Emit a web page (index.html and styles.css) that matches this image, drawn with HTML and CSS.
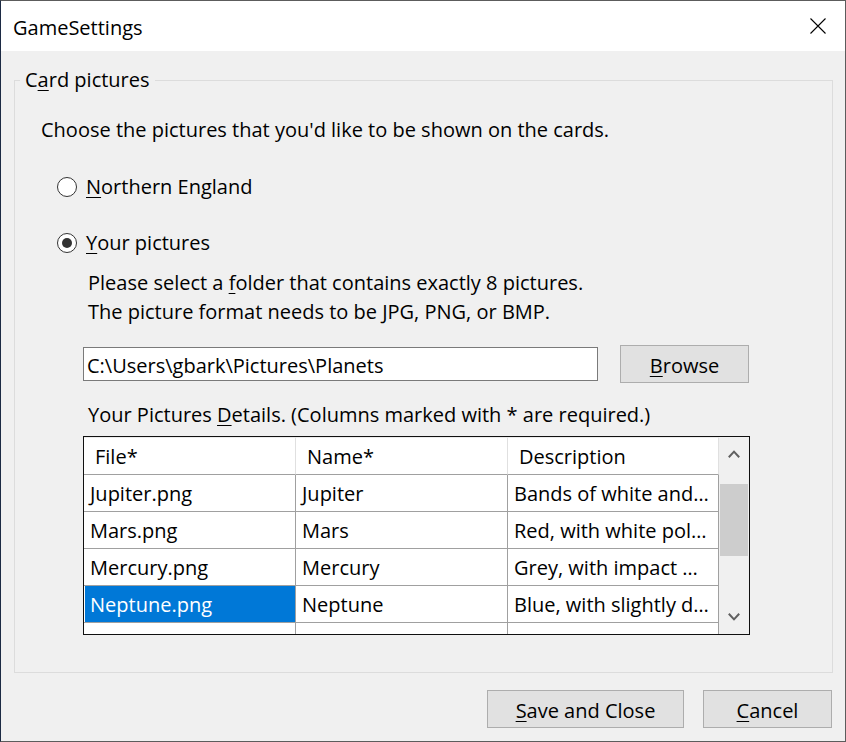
FILE: index.html
```html
<!DOCTYPE html>
<html lang="en">
<head>
<meta charset="utf-8">
<title>GameSettings</title>
<link rel="stylesheet" href="styles.css">
</head>
<body>
<div class="window">
  <div class="titlebar">
    <span class="title">GameSettings</span>
    <button class="close" aria-label="Close">
      <svg width="16" height="16" viewBox="0 0 16 16"><path d="M0.5 0.5 L15.5 15.5 M15.5 0.5 L0.5 15.5" stroke="#000" stroke-width="1.1" fill="none"/></svg>
    </button>
  </div>
  <div class="body">
    <fieldset class="group">
      <legend>C<u>a</u>rd pictures</legend>
      <p class="intro">Choose the pictures that you'd like to be shown on the cards.</p>
      <label class="radio first"><input type="radio" name="src"><span><u>N</u>orthern England</span></label>
      <label class="radio second"><input type="radio" name="src" checked><span><u>Y</u>our pictures</span></label>
      <div class="sub">
        <p class="hint">Please select a <u>f</u>older that contains exactly 8 pictures.<br>The picture format needs to be JPG, PNG, or BMP.</p>
        <div class="path-row">
          <input class="path" type="text" value="C:\Users\gbark\Pictures\Planets">
          <button class="btn browse"><u>B</u>rowse</button>
        </div>
        <p class="details-label">Your Pictures <u>D</u>etails. (Columns marked with * are required.)</p>
        <div class="grid">
          <div class="table">
            <div class="row head"><div class="cell">File*</div><div class="cell">Name*</div><div class="cell">Description</div></div>
            <div class="row"><div class="cell">Jupiter.png</div><div class="cell">Jupiter</div><div class="cell">Bands of white and…</div></div>
            <div class="row"><div class="cell">Mars.png</div><div class="cell">Mars</div><div class="cell">Red, with white pol…</div></div>
            <div class="row"><div class="cell">Mercury.png</div><div class="cell">Mercury</div><div class="cell">Grey, with impact …</div></div>
            <div class="row"><div class="cell selected">Neptune.png</div><div class="cell">Neptune</div><div class="cell">Blue, with slightly d…</div></div>
            <div class="row"><div class="cell"></div><div class="cell"></div><div class="cell"></div></div>
          </div>
          <div class="scrollbar">
            <div class="sb-btn"><svg width="12" height="8" viewBox="0 0 12 8"><path d="M0.8 7.2 L6 1.6 L11.2 7.2" stroke="#606060" stroke-width="2" fill="none"/></svg></div>
            <div class="track"><div class="thumb"></div></div>
            <div class="sb-btn"><svg width="12" height="8" viewBox="0 0 12 8"><path d="M0.8 0.8 L6 6.4 L11.2 0.8" stroke="#606060" stroke-width="2" fill="none"/></svg></div>
          </div>
        </div>
      </div>
    </fieldset>
    <div class="actions">
      <button class="btn save"><u>S</u>ave and Close</button>
      <button class="btn cancel"><u>C</u>ancel</button>
    </div>
  </div>
</div>
</body>
</html>
```

FILE: styles.css
```css
* { box-sizing: border-box; }

html, body {
  margin: 0;
  padding: 0;
  background: #f0f0f0;
}

body {
  font-family: "Open Sans", "Noto Sans", "Liberation Sans", sans-serif;
  font-size: 20px;
  color: #000;
}

.window {
  width: 846px;
  height: 742px;
  border: 1px solid #5c5c5c;
  border-left-color: #1c2a44;
  background: #f0f0f0;
  display: flex;
  flex-direction: column;
}

.titlebar {
  height: 50px;
  background: #fff;
  display: flex;
  align-items: center;
  justify-content: space-between;
  padding-left: 12px;
}

.title {
  font-size: 20px;
  line-height: 28px;
  padding-top: 4px;
}

.close {
  border: 0;
  background: transparent;
  padding: 0;
  width: 46px;
  height: 50px;
  margin-right: 4px;
  display: flex;
  align-items: center;
  justify-content: center;
}

.close svg { display: block; }

.body {
  padding: 0 12px 0 13px;
}

.group {
  margin: 15px 0 0 0;
  padding: 0 0 37px 0;
  border: 1px solid #dcdcdc;
  min-width: 0;
}

.group legend {
  margin-left: 5px;
  padding: 0 5px;
  line-height: 28px;
}

u { text-decoration: underline; text-underline-offset: 3px; text-decoration-thickness: 1px; }

.intro {
  margin: 22px 0 0 26px;
  line-height: 28px;
}

.radio {
  display: flex;
  align-items: center;
  gap: 9px;
  margin-left: 42px;
  line-height: 28px;
}

.radio.first { margin-top: 29px; }
.radio.second { margin-top: 28px; }

.radio input {
  appearance: none;
  -webkit-appearance: none;
  margin: 0;
  width: 20px;
  height: 20px;
  border: 1px solid #333;
  border-radius: 50%;
  background: #fff;
  display: grid;
  place-items: center;
}

.radio input:checked::after {
  content: "";
  width: 10px;
  height: 10px;
  border-radius: 50%;
  background: #333;
}

.sub {
  margin-left: 68px;
}

.hint {
  margin: 12px 0 0 5px;
  line-height: 28.5px;
}

.path-row {
  margin-top: 19px;
  display: flex;
  align-items: center;
  gap: 22px;
}

.path {
  width: 515px;
  height: 34px;
  border: 1px solid #7a7a7a;
  background: #fff;
  font: inherit;
  color: #000;
  padding: 2px 3px 0 3px;
  outline: none;
}

.btn {
  font: inherit;
  color: #000;
  background: #e1e1e1;
  border: 1px solid #adadad;
  height: 38px;
  padding: 2px 0 0 0;
}

.browse { width: 129px; }

.details-label {
  margin: 18px 0 0 5px;
  line-height: 28px;
}

.grid {
  margin-top: 7px;
  width: 667px;
  height: 199px;
  border: 1px solid #101010;
  display: flex;
  background: #fff;
}

.table {
  width: 635px;
  height: 197px;
  overflow: hidden;
}

.row {
  display: grid;
  grid-template-columns: 212px 212px 211px;
  height: 37px;
}

.cell {
  border-right: 1px solid #a0a0a0;
  border-bottom: 1px solid #a0a0a0;
  padding: 1px 0 0 6px;
  line-height: 36px;
  white-space: nowrap;
  overflow: hidden;
}

.row.head { height: 38px; }
.row.head .cell {
  padding-left: 11px;
  padding-top: 1px;
  border-top: 1px solid #ececec;
  border-right-color: #e0e0e0;
  line-height: 36px;
}

.cell.selected {
  background: #0078d7;
  color: #fff;
  box-shadow: inset 1px 0 0 #fff;
}

.scrollbar {
  width: 30px;
  height: 197px;
  background: #f0f0f0;
  display: flex;
  flex-direction: column;
}

.sb-btn {
  height: 34px;
  display: flex;
  align-items: center;
  justify-content: center;
}

.track {
  flex: 1;
}

.thumb {
  margin: 13px 1px 0 1px;
  height: 72px;
  background: #cdcdcd;
}

.actions {
  margin-top: 17px;
  padding-right: 1px;
  display: flex;
  justify-content: flex-end;
  gap: 19px;
}

.save { width: 197px; }
.cancel { width: 129px; }
```
